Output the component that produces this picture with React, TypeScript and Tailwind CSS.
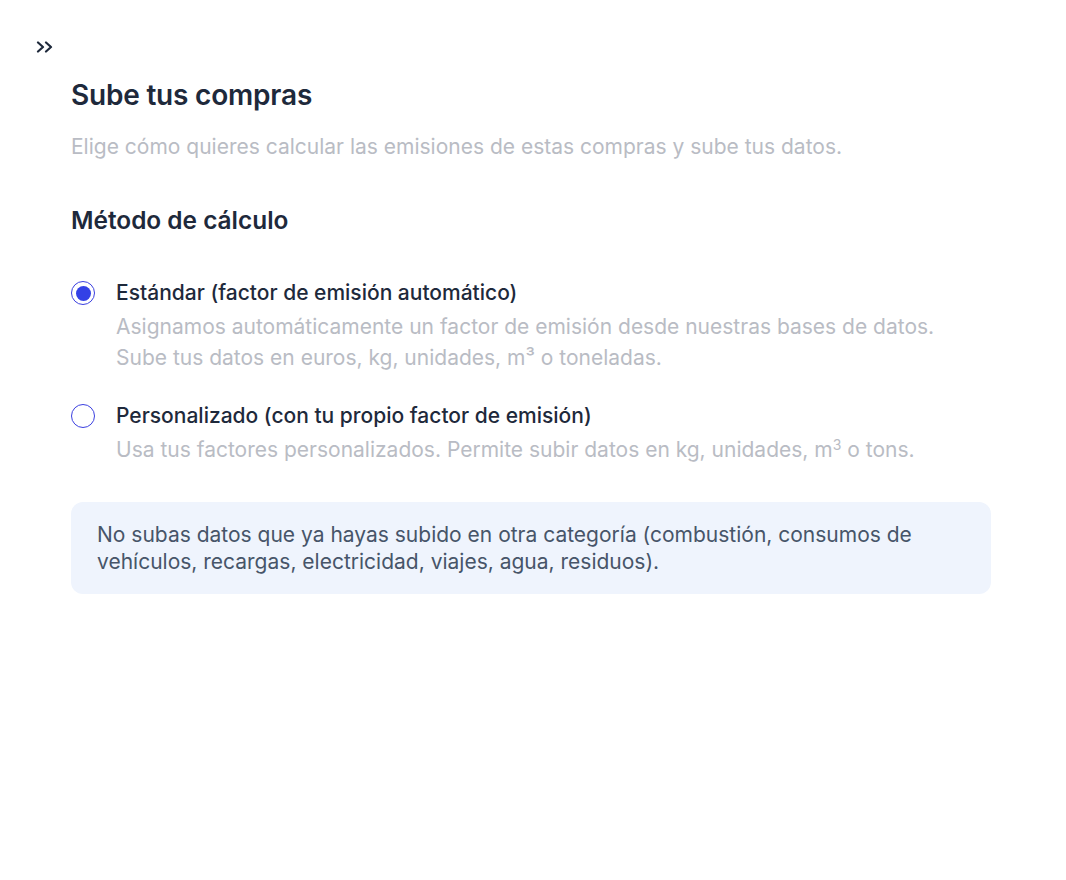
import { useState } from "react";

type Option = { id: string; title: string; lines: React.ReactNode[] };

const options: Option[] = [
  {
    id: "standard",
    title: "Estándar (factor de emisión automático)",
    lines: [
      "Asignamos automáticamente un factor de emisión desde nuestras bases de datos.",
      "Sube tus datos en euros, kg, unidades, m³ o toneladas.",
    ],
  },
  {
    id: "custom",
    title: "Personalizado (con tu propio factor de emisión)",
    lines: [
      <>
        Usa tus factores personalizados. Permite subir datos en kg, unidades, m
        <sup className="text-[14px]">3</sup> o tons.
      </>,
    ],
  },
];

function DoubleChevron() {
  return (
    <svg width="18" height="12" viewBox="0 0 18 12" fill="none" stroke="#1e293b" strokeWidth="2.2" strokeLinecap="round" strokeLinejoin="round">
      <path d="M2 1.5l5 4.5-5 4.5" />
      <path d="M10 1.5l5 4.5-5 4.5" />
    </svg>
  );
}

export default function App() {
  const [method, setMethod] = useState("standard");

  return (
    <div className="min-h-[880px] bg-white font-['Inter',sans-serif] text-[#1e293b]">
      <div className="flex h-[55px] items-start px-[36px] pt-[41px]">
        <DoubleChevron />
      </div>

      <div className="ml-[71px] w-[920px] pt-[22px]">
        <h1 className="text-[28px] font-semibold leading-[36px] tracking-[-0.2px]">Sube tus compras</h1>
        <p className="mt-[19px] text-[21px] leading-[30px] text-[#b9bcc4]">
          Elige cómo quieres calcular las emisiones de estas compras y sube tus datos.
        </p>

        <h2 className="mt-[42px] text-[24.4px] font-semibold leading-[32px]">Método de cálculo</h2>

        <div className="mt-[39px] flex flex-col gap-[25px]">
          {options.map((o) => {
            const active = method === o.id;
            return (
              <label key={o.id} className="flex cursor-pointer gap-[21px]" onClick={() => setMethod(o.id)}>
                <span className="flex h-[36px] items-center">
                  <span className="flex size-[24px] items-center justify-center rounded-full border-[1.5px] border-[#3b3fe0] bg-white">
                    {active ? <span className="size-[15px] rounded-full bg-[#3341e6]" /> : null}
                  </span>
                </span>
                <span className="flex flex-col">
                  <span className="text-[21px] font-medium leading-[36px]">{o.title}</span>
                  {o.lines.map((l, i) => (
                    <span key={i} className="text-[21px] leading-[31px] text-[#b9bcc4]">
                      {l}
                    </span>
                  ))}
                </span>
              </label>
            );
          })}
        </div>

        <div className="mt-[37px] rounded-[12px] bg-[#eff4fd] px-[26px] pb-[19px] pt-[19px] text-[21px] leading-[27px] text-[#475569]">
          No subas datos que ya hayas subido en otra categoría (combustión, consumos de vehículos, recargas,
          electricidad, viajes, agua, residuos).
        </div>
      </div>
    </div>
  );
}
